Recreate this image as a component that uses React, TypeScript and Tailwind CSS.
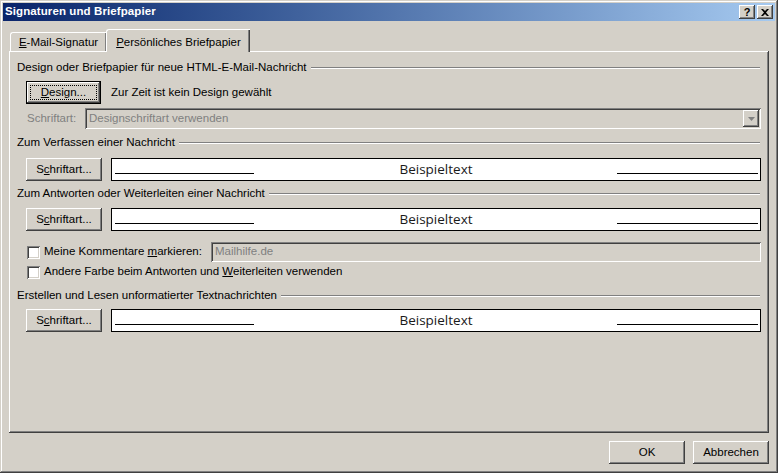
import React from "react";

// Klassische Win-Bevels als feste Klassenstrings
const raised =
  "bg-[#d4d0c8] shadow-[inset_-1px_-1px_#404040,inset_1px_1px_#ffffff,inset_-2px_-2px_#808080]";
const sunken =
  "shadow-[inset_1px_1px_#808080,inset_-1px_-1px_#ffffff,inset_2px_2px_#404040,inset_-2px_-2px_#d4d0c8]";

const font = "font-['Liberation_Sans',Arial,sans-serif]";

function SectionHeader({ label, className = "" }: { label: string; className?: string }) {
  return (
    <div className={`flex items-center h-[14px] ${className}`}>
      <span className="whitespace-nowrap text-[11.5px] text-black">{label}</span>
      <div className="flex-1 ml-[4px] mr-[1px] h-[2px] border-t border-t-[#808080] border-b border-b-white" />
    </div>
  );
}

function Btn({ children, className = "" }: { children: React.ReactNode; className?: string }) {
  return (
    <div
      className={`${raised} h-[23px] w-[76px] flex items-center justify-center text-[11.5px] text-black ${className}`}
    >
      {children}
    </div>
  );
}

function SampleBox() {
  return (
    <div className="relative flex-1 h-[23px] ml-[9px] bg-white border border-black flex items-center justify-center">
      <span className="absolute left-[3px] bottom-[6px] w-[139px] h-px bg-black" />
      <span className="text-[13.5px] text-[#1a1a1a] font-['Open_Sans','Liberation_Sans',sans-serif] leading-none">
        Beispieltext
      </span>
      <span className="absolute right-[2px] bottom-[6px] w-[141px] h-px bg-black" />
    </div>
  );
}

function FontRow({ className = "" }: { className?: string }) {
  return (
    <div className={`flex items-center pl-[9px] ${className}`}>
      <Btn className="w-[75px]">
        <span>
          S<span className="underline">c</span>hriftart...
        </span>
      </Btn>
      <SampleBox />
    </div>
  );
}

function CheckBox() {
  return <div className={`w-[13px] h-[13px] bg-white ${sunken} shrink-0`} />;
}

export default function App() {
  return (
    <div
      className={`${font} relative w-[778px] h-[473px] bg-[#d4d0c8] overflow-hidden select-none shadow-[inset_-1px_-1px_#404040,inset_1px_1px_#d4d0c8,inset_-2px_-2px_#808080,inset_2px_2px_#ffffff]`}
    >
      {/* Titelleiste */}
      <div className="mx-[3px] mt-[3px] h-[18px] flex items-center bg-gradient-to-r from-[#0a246a] to-[#a6caf0] pl-[2px] pr-[2px]">
        <span className="text-white font-bold text-[11.5px] tracking-[0.1px]">Signaturen und Briefpapier</span>
        <div className="ml-auto flex items-center gap-[2px]">
          <div className={`${raised} w-[16px] h-[14px] flex items-center justify-center text-[11px] font-bold text-black leading-none`}>
            ?
          </div>
          <div className={`${raised} w-[16px] h-[14px] flex items-center justify-center`}>
            <svg width="8" height="7" viewBox="0 0 8 7">
              <path d="M0 0h2l2 2 2-2h2L5 3.5 8 7H6L4 5 2 7H0l3-3.5z" fill="#000" />
            </svg>
          </div>
        </div>
      </div>

      {/* Reiter */}
      <div className="relative flex items-end h-[30px] pl-[10px]">
        <div className="h-[19px] w-[96px] mb-0 flex items-center justify-center text-[11.5px] text-black rounded-tl-[3px] border-t border-l border-white shadow-[inset_-1px_0_#808080]">
          <span className="pt-[1px]">
            <span className="underline">E</span>-Mail-Signatur
          </span>
        </div>
        <div className="relative z-10 h-[23px] w-[144px] -mb-[1px] bg-[#d4d0c8] flex items-start justify-center pt-[4px] text-[11.5px] text-black rounded-tl-[3px] border-t border-l border-white shadow-[inset_-1px_0_#404040,inset_-2px_0_#808080]">
          <span>
            <span className="underline">P</span>ersönliches Briefpapier
          </span>
        </div>
      </div>

      {/* Registerseite */}
      <div className="ml-[9px] w-[760px] h-[382px] pl-[8px] pr-[8px] pt-[10px] shadow-[inset_-1px_-1px_#404040,inset_1px_1px_#ffffff,inset_-2px_-2px_#808080]">
        <SectionHeader label="Design oder Briefpapier für neue HTML-E-Mail-Nachricht" />

        <div className="flex items-center mt-[6px] pl-[9px]">
          <div className="h-[23px] w-[75px] border border-black flex">
            <div className={`${raised} flex-1 flex items-center justify-center p-[3px]`}>
              <div className="w-full h-full border border-dotted border-black flex items-center justify-center text-[11.5px] text-black">
                <span>
                  <span className="underline">D</span>esign...
                </span>
              </div>
            </div>
          </div>
          <span className="ml-[10px] text-[11.5px] text-black">Zur Zeit ist kein Design gewählt</span>
        </div>

        <div className="flex items-center mt-[4px] pl-[10px]">
          <span className="text-[11.5px] text-[#808080] w-[58px]">Schriftart:</span>
          <div className={`flex-1 h-[21px] ${sunken} flex items-center pl-[4px] pr-[2px]`}>
            <span className="text-[11.5px] text-[#808080]">Designschriftart verwenden</span>
            <div className={`${raised} ml-auto w-[16px] h-[17px] flex items-center justify-center`}>
              <svg width="7" height="4" viewBox="0 0 7 4">
                <path d="M0 0h7L3.5 4z" fill="#808080" />
              </svg>
            </div>
          </div>
        </div>

        <SectionHeader label="Zum Verfassen einer Nachricht" className="mt-[7px]" />
        <FontRow className="mt-[8px]" />

        <SectionHeader label="Zum Antworten oder Weiterleiten einer Nachricht" className="mt-[6px]" />
        <FontRow className="mt-[7px]" />

        <div className="flex items-center mt-[11px] pl-[10px] h-[20px]">
          <CheckBox />
          <span className="ml-[4px] text-[11.5px] text-black w-[167px]">
            Meine Kommentare <span className="underline">m</span>arkieren:
          </span>
          <div className={`flex-1 h-[20px] ${sunken} flex items-center pl-[4px]`}>
            <span className="text-[11.5px] text-[#808080]">Mailhilfe.de</span>
          </div>
        </div>

        <div className="flex items-center mt-[3px] pl-[10px] h-[14px]">
          <CheckBox />
          <span className="ml-[4px] text-[11.5px] text-black">
            Andere Farbe beim Antworten und <span className="underline">W</span>eiterleiten verwenden
          </span>
        </div>

        <SectionHeader label="Erstellen und Lesen unformatierter Textnachrichten" className="mt-[10px]" />
        <FontRow className="mt-[6px]" />
      </div>

      {/* Schaltflächen */}
      <div className="flex justify-end gap-[8px] mt-[8px] pr-[9px]">
        <Btn>OK</Btn>
        <Btn className="w-[75px]">Abbrechen</Btn>
      </div>
    </div>
  );
}
